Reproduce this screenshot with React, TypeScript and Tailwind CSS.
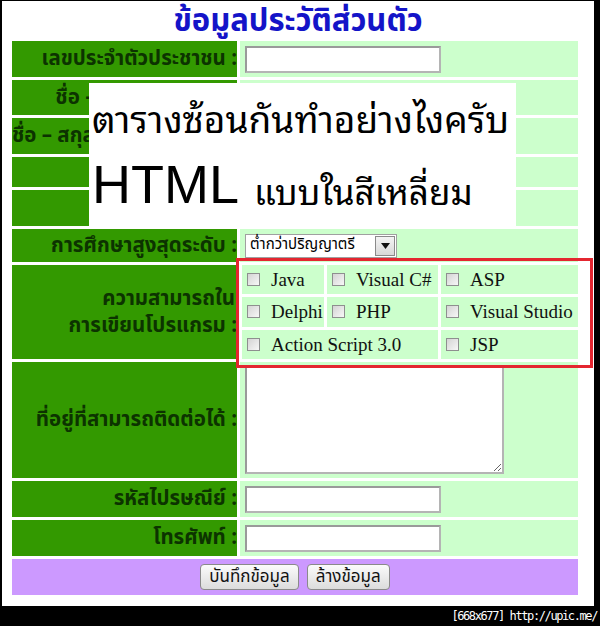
import React from "react";

const thai = { fontFamily: "Tahoma, 'Noto Sans Thai', 'Noto Sans', 'DejaVu Sans', sans-serif" };
const looped = { fontFamily: "'Noto Sans Thai Looped', 'Noto Serif Thai', 'Noto Sans Thai', 'Noto Sans', sans-serif" };
const serif = { fontFamily: "'Liberation Serif', 'Times New Roman', serif" };

function Label({ children, className = "" }: { children: React.ReactNode; className?: string }) {
  return (
    <div
      className={`w-[225px] shrink-0 bg-[#339900] flex items-center justify-end overflow-hidden whitespace-nowrap text-right text-[20.5px] font-bold text-[#0c3300] leading-tight ${className}`}
      style={thai}
    >
      {children}
    </div>
  );
}

function TextBox({ w = 196 }: { w?: number }) {
  return (
    <div
      className="h-[27px] bg-white border-2 border-[#b4b4b4] border-t-[#9a9a9a] border-l-[#9a9a9a]"
      style={{ width: w }}
    />
  );
}

function Check({ label, className = "" }: { label: string; className?: string }) {
  return (
    <div className={`flex items-center gap-[11px] pl-[5px] bg-[#ccffcc] ${className}`}>
      <span className="w-[13px] h-[13px] shrink-0 border border-[#8e8f8f] bg-gradient-to-br from-[#d4d4d4] to-[#f7f7f7]" />
      <span className="text-[19px] text-[#111] whitespace-nowrap leading-none" style={serif}>
        {label}
      </span>
    </div>
  );
}

function Row({ h, label, children, labelClass }: { h: number; label: React.ReactNode; children?: React.ReactNode; labelClass?: string }) {
  return (
    <div className="flex gap-[3px]" style={{ height: h }}>
      <Label className={labelClass}>{label}</Label>
      <div className="flex-1 bg-[#ccffcc] flex items-center pl-[5px]">{children}</div>
    </div>
  );
}

export default function App() {
  return (
    <div className="w-[600px] h-[626px] bg-black flex flex-col overflow-hidden">
      <div className="ml-[2px] mt-[1px] w-[592px] h-[605px] bg-white relative">
        <div
          className="h-[40px] flex items-center justify-center text-[31px] font-bold text-[#1414c8] leading-[40px] pt-[2px] whitespace-nowrap"
          style={thai}
        >
          ข้อมูลประวัติส่วนตัว
        </div>

        <div className="ml-[10px] w-[566px] flex flex-col gap-[3px]">
          <Row h={36} label="เลขประจำตัวประชาชน :">
            <TextBox />
          </Row>
          <Row h={35} label="ชื่อ – นามสกุล (ไทย) :">
            <TextBox />
          </Row>
          <Row h={36} label="ชื่อ – สกุล (ภาษาอังกฤษ) :" labelClass="justify-start">
            <TextBox />
          </Row>
          <Row h={30} label="วันเกิด :" />
          <Row h={36} label="เพศ :" />
          <Row h={33} label="การศึกษาสูงสุดระดับ :">
            <div className="h-[24px] w-[152px] flex items-center bg-white border border-[#a0a0a0]">
              <span className="flex-1 pl-[4px] text-[15px] text-black whitespace-nowrap" style={thai}>
                ต่ำกว่าปริญญาตรี
              </span>
              <span className="w-[20px] h-[20px] mr-[1px] flex items-center justify-center border border-[#8a8a8a] bg-gradient-to-b from-[#f4f4f4] to-[#d8d8d8]">
                <svg width="9" height="6" viewBox="0 0 9 6">
                  <path d="M0 0h9L4.5 6z" fill="#111" />
                </svg>
              </span>
            </div>
          </Row>
          <div className="flex gap-[3px] h-[94px]">
            <div
              className="w-[225px] shrink-0 bg-[#339900] flex flex-col justify-center text-right whitespace-nowrap overflow-hidden text-[20.5px] font-bold text-[#0c3300] leading-[27px]"
              style={thai}
            >
              <div className="pr-[2px]">ความสามารถใน</div>
              <div>การเขียนโปรแกรม :</div>
            </div>
            <div className="flex-1 bg-white pl-[2px]">
              <div className="grid grid-cols-[82px_111px_137px] grid-rows-3 gap-[3px] h-full">
                <Check label="Java" />
                <Check label="Visual C#" />
                <Check label="ASP" />
                <Check label="Delphi" />
                <Check label="PHP" />
                <Check label="Visual Studio" />
                <Check label="Action Script 3.0" className="col-span-2" />
                <Check label="JSP" />
              </div>
            </div>
          </div>
          <Row h={116} label="ที่อยู่ที่สามารถติดต่อได้ :">
            <textarea className="w-[259px] h-[108px] bg-white border-2 border-[#b4b4b4] border-t-[#9a9a9a] border-l-[#9a9a9a] resize" />
          </Row>
          <Row h={36} label="รหัสไปรษณีย์ :">
            <TextBox />
          </Row>
          <Row h={36} label="โทรศัพท์ :">
            <TextBox />
          </Row>
          <div className="h-[36px] bg-[#cc99ff] flex items-center justify-center gap-[8px]">
            <button
              className="h-[26px] px-[8px] rounded-[4px] border border-[#8a8a8a] bg-gradient-to-b from-[#fbfbfb] to-[#dcdcdc] text-[17px] leading-none text-[#111]"
              style={thai}
            >
              บันทึกข้อมูล
            </button>
            <button
              className="h-[26px] px-[8px] rounded-[4px] border border-[#8a8a8a] bg-gradient-to-b from-[#fbfbfb] to-[#dcdcdc] text-[17px] leading-none text-[#111]"
              style={thai}
            >
              ล้างข้อมูล
            </button>
          </div>
        </div>

        {/* pasted-over note */}
        <div className="absolute left-[87px] top-[82px] w-[427px] h-[143px] bg-white flex flex-col pl-[3px] text-black">
          <div className="h-[66px] flex items-center text-[37px] leading-none whitespace-nowrap" style={looped}>
            ตารางซ้อนกันทำอย่างไงครับ
          </div>
          <div className="flex items-end gap-[15px] h-[62px]">
            <span className="text-[54px] leading-none" style={{ fontFamily: "'Liberation Sans', Arial, sans-serif" }}>
              HTML
            </span>
            <span className="text-[35px] leading-none pb-[4px] whitespace-nowrap" style={looped}>
              แบบในสีเหลี่ยม
            </span>
          </div>
        </div>

        {/* red highlight */}
        <div className="absolute left-[234px] top-[257px] w-[357px] h-[110px] border-[3px] border-[#e42630]" />
      </div>
      <div
        className="h-[20px] flex items-center justify-end pr-[3px] text-white text-[12px] leading-none"
        style={{ fontFamily: "'DejaVu Sans Mono', 'Liberation Mono', monospace", letterSpacing: "-1.4px" }}
      >
        [668x677] http://upic.me/
      </div>
    </div>
  );
}
